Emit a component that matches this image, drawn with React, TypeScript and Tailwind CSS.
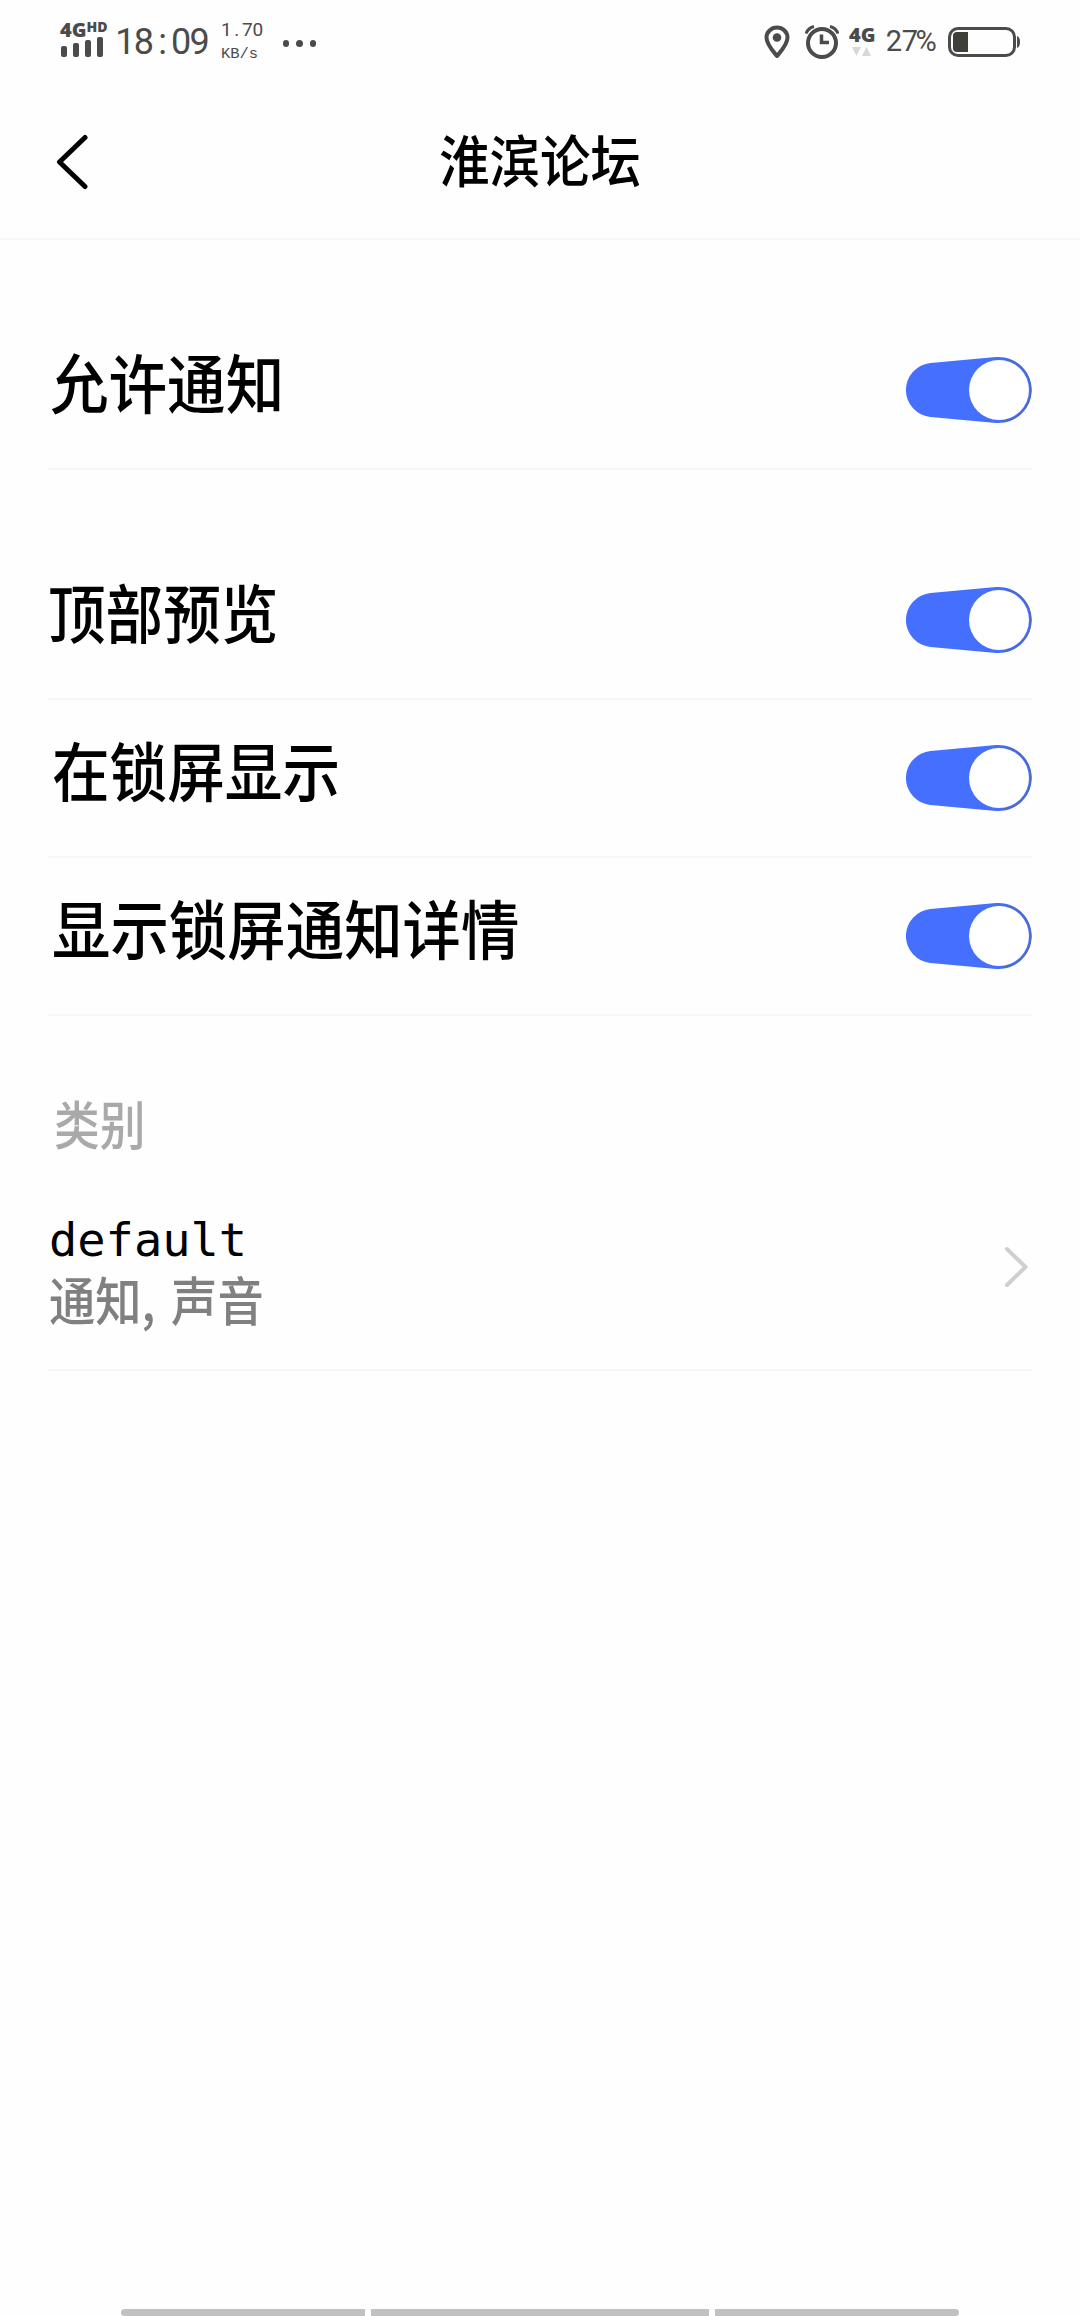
import { useState } from 'react';

interface ToggleProps {
  checked: boolean;
  onChange: () => void;
  label: string;
}

const Toggle = ({ checked, onChange, label }: ToggleProps) => (
  <button role="switch" aria-checked={checked} aria-label={label} onClick={onChange}>
    <svg
      width="126"
      height="66"
      viewBox="0 0 126 66"
      className={checked ? 'text-[#456fff]' : 'rotate-180 text-gray-300'}
    >
      <path
        d="M24.6 6.1 90 0.1A33 33 0 1 1 90 65.9L24.6 59.9A27 27 0 0 1 24.6 6.1Z"
        fill="currentColor"
      />
      <path d="M97 1.8A31.4 31.4 0 0 1 97 64.2" fill="none" stroke="#5069c4" strokeWidth="1.6" />
      <circle cx="93" cy="33" r="30" fill="#fff" />
    </svg>
  </button>
);

interface SettingRowProps {
  label: string;
  offset?: string;
}

const SettingRow = ({ label, offset = 'scale-x-90' }: SettingRowProps) => {
  const [enabled, setEnabled] = useState(true);

  return (
    <div className="flex h-[158px] items-center justify-between border-b-2 border-[#f7f7f7]">
      <span
        className={`mb-5 origin-left text-[64px] leading-none font-medium whitespace-nowrap ${offset}`}
      >
        {label}
      </span>
      <Toggle checked={enabled} onChange={() => setEnabled(!enabled)} label={label} />
    </div>
  );
};

const Digits = ({ value, cell }: { value: string; cell: string }) => (
  <span className="flex font-['Roboto',sans-serif]">
    {value.split('').map((char, i) => (
      <span key={i} className={`flex justify-center ${cell}`}>
        {char}
      </span>
    ))}
  </span>
);

const StatusBar = () => (
  <div className="flex h-[84px] items-start justify-between pr-[60px] pl-[60px] text-[#4b4b4b]">
    <div className="flex">
      <div className="w-[47px] pt-[20px] font-['Open_Sans',sans-serif] font-extrabold">
        <div className="flex h-[17px] items-start leading-none">
          <span className="text-[20px] leading-[19px]">4G</span>
          <span className="text-[14px] leading-[13px]">HD</span>
        </div>
        <div className="flex h-[20px] items-end gap-[6px] pl-[1px]">
          <span className="h-[11px] w-[6px] rounded-[2px] bg-current" />
          <span className="h-[14px] w-[6px] rounded-[2px] bg-current" />
          <span className="h-[17px] w-[6px] rounded-[2px] bg-current" />
          <span className="h-[20px] w-[6px] rounded-[2px] bg-current" />
        </div>
      </div>
      <div className="ml-[9px] pt-[24px] text-[36px] leading-[36px]">
        <Digits value="18:09" cell="w-[18.6px]" />
      </div>
      <div className="ml-[12px] w-[44px] pt-[20px]">
        <div className="text-[19px] leading-[19px]">
          <Digits value="1.70" cell="w-[10.5px]" />
        </div>
        <div className="mt-[7px] font-['Liberation_Mono',monospace] text-[15.5px] leading-[16px]">KB/s</div>
      </div>
      <div className="ml-[18px] flex gap-[7px] pt-[40px]">
        <span className="size-[6.5px] rounded-full bg-current" />
        <span className="size-[6.5px] rounded-full bg-current" />
        <span className="size-[6.5px] rounded-full bg-current" />
      </div>
    </div>

    <div className="flex">
      <svg width="26" height="34" viewBox="0 0 26 34" className="mt-[25px]" fill="none">
        <path
          d="M13 31C9 26 2.5 19.5 2.5 12.5a10.5 10 0 0 1 21 0C23.5 19.5 17 26 13 31Z"
          stroke="currentColor"
          strokeWidth="4"
          strokeLinejoin="round"
        />
        <circle cx="13" cy="12.5" r="4.3" fill="currentColor" />
      </svg>
      <svg width="34" height="34" viewBox="0 0 34 34" className="mt-[25px] ml-[15px]" fill="none" stroke="currentColor">
        <circle cx="17" cy="18" r="14" strokeWidth="4" />
        <path d="M16.5 9.5V17.5H24" strokeWidth="3.5" />
        <path d="M1 8.5Q3 3 9 1.5M33 8.5Q31 3 25 1.5" strokeWidth="3" />
      </svg>
      <div className="ml-[10px] w-[26px] pt-[25px]">
        <div className="font-['Open_Sans',sans-serif] text-[20px] leading-[20px] font-extrabold">4G</div>
        <svg width="20" height="10" viewBox="0 0 20 10" className="mt-[2px] ml-[3px]" fill="#d8d8d8">
          <path d="M0 0H9L4.5 9Z" />
          <path d="M10 9H19L14.5 0Z" />
        </svg>
      </div>
      <div className="ml-[11px] w-[54px] pt-[26px] text-[29px] leading-[30px]">
        <Digits value="27%" cell="w-[16px]" />
      </div>
      <svg width="72" height="30" viewBox="0 0 72 30" className="mt-[27px] ml-[8px]">
        <rect x="1.5" y="1.5" width="65" height="27" rx="8.5" fill="none" stroke="currentColor" strokeWidth="3" />
        <path d="M9 5H20V25H9Q5 25 5 21V9Q5 5 9 5Z" fill="#403f38" />
        <path d="M69 9Q72 10 72 15T69 21Z" fill="currentColor" />
      </svg>
    </div>
  </div>
);

const Header = () => (
  <header className="grid h-[156px] grid-cols-3 items-start border-b-2 border-[#f7f7f7]">
    <button aria-label="返回" className="mt-[50px] ml-[56px] w-[34px]">
      <svg width="34" height="56" viewBox="0 0 34 56" fill="none">
        <path d="M29 3.5 3.5 28 29 52.5" stroke="#000" strokeWidth="5" strokeLinecap="round" strokeLinejoin="round" />
      </svg>
    </button>
    <h1 className="mt-[46px] flex scale-x-90 justify-center text-[56px] leading-none font-medium whitespace-nowrap">
      淮滨论坛
    </h1>
  </header>
);

const CategoryRow = () => (
  <button className="flex h-[178px] w-full items-start justify-between border-b-2 border-[#f7f7f7] text-left">
    <div className="pt-[19px] pl-px">
      <div className="font-['DejaVu_Sans_Mono',monospace] text-[47px] leading-[56px]">default</div>
      <div className="mt-[5px] origin-left scale-x-[0.89] text-[52px] leading-[52px] font-medium whitespace-nowrap text-[#808080] [word-spacing:6px]">
        通知, 声音
      </div>
    </div>
    <svg width="26" height="42" viewBox="0 0 26 42" className="mt-[53px] mr-[2px]" fill="none">
      <path d="M3 3 21.5 21 3 39" stroke="#cfcfcf" strokeWidth="4" strokeLinecap="round" strokeLinejoin="round" />
    </svg>
  </button>
);

export default function App() {
  return (
    <div className="flex h-[2316px] w-[1080px] flex-col overflow-hidden bg-[#fefefe] font-['Noto_Sans_CJK_SC',sans-serif] text-black">
      <StatusBar />
      <Header />
      <main className="flex flex-1 flex-col px-12">
        <section className="mt-[72px]">
          <SettingRow label="允许通知" offset="ml-0.5 scale-x-[0.915]" />
        </section>
        <section className="mt-[72px]">
          <SettingRow label="顶部预览" />
          <SettingRow label="在锁屏显示" offset="ml-1 scale-x-90" />
          <SettingRow label="显示锁屏通知详情" offset="ml-1 scale-x-[0.913]" />
        </section>
        <h2 className="mt-[81px] ml-1.5 h-[96px] origin-left scale-x-[0.88] text-[52px] leading-[52px] font-medium text-[#a9a9a9]">
          类别
        </h2>
        <CategoryRow />
      </main>
      <nav className="flex justify-center gap-1.5">
        <span className="h-[7px] w-[244px] rounded-l bg-[#c1c1c1]" />
        <span className="h-[7px] w-[338px] bg-[#c1c1c1]" />
        <span className="h-[7px] w-[244px] rounded-r bg-[#c1c1c1]" />
      </nav>
    </div>
  );
}
